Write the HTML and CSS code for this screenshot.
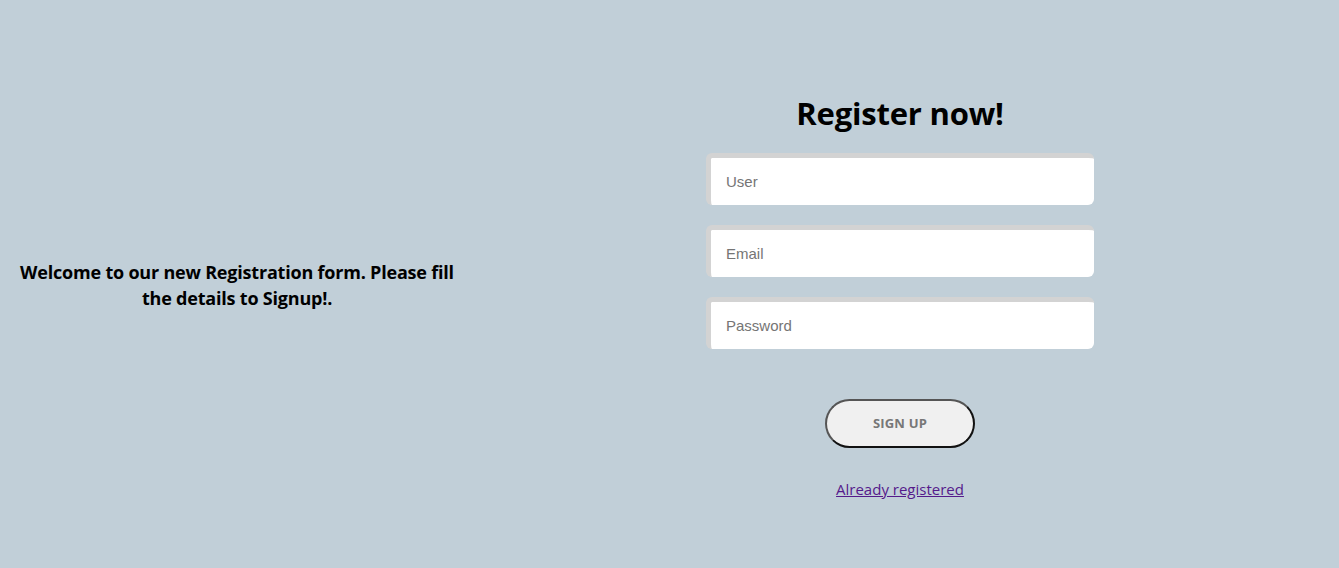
FILE: index.html
```html
<!DOCTYPE html>
<html>
<head>
<meta charset="utf-8">
<link rel="stylesheet" href="styles.css">
</head>
<body>
<main class="page">
  <section class="intro">
    <p>Welcome to our new Registration form. Please fill the details to Signup!.</p>
  </section>
  <section class="form-col">
    <h1>Register now!</h1>
    <form class="form">
      <input class="field" type="text" placeholder="User">
      <input class="field" type="email" placeholder="Email">
      <input class="field" type="password" placeholder="Password">
      <button class="btn" type="button">SIGN UP</button>
    </form>
    <a class="link" href="">Already registered</a>
  </section>
</main>
</body>
</html>
```

FILE: styles.css
```css
html, body {
  margin: 0;
  padding: 0;
  background: #c1cfd8;
}
body {
  font-family: "Open Sans", "Noto Sans", sans-serif;
}
.page {
  height: 568px;
  display: grid;
  grid-template-columns: 474px 232px 388px 1fr;
  align-items: center;
}
.intro {
  grid-column: 1;
  display: flex;
  justify-content: center;
  padding-top: 2px;
}
.intro p {
  width: 450px;
  margin: 0;
  text-align: center;
  font-size: 18px;
  font-weight: 700;
  line-height: 26px;
  letter-spacing: -0.2px;
  color: #000;
}
.form-col {
  grid-column: 3;
  display: flex;
  flex-direction: column;
  align-items: center;
  padding-top: 24px;
}
h1 {
  margin: 0 0 20px;
  font-size: 31px;
  line-height: 40px;
  font-weight: 700;
  letter-spacing: -0.2px;
  color: #000;
}
.form {
  width: 100%;
  display: flex;
  flex-direction: column;
  align-items: center;
  gap: 20px;
}
.field {
  box-sizing: border-box;
  width: 388px;
  height: 52px;
  margin: 0;
  border: 0;
  border-top: 5px solid #d3d3d3;
  border-left: 5px solid #d3d3d3;
  border-radius: 6px;
  background: #fff;
  padding: 0 15px;
  font-family: "Liberation Sans", Arial, sans-serif;
  font-size: 15px;
  color: #333;
  outline: none;
}
.field::placeholder {
  color: #757575;
}
.btn {
  margin-top: 30px;
  box-sizing: border-box;
  width: 150px;
  height: 49px;
  border: 2px solid #555;
  border-bottom-color: #111;
  border-right-color: #111;
  border-radius: 25px;
  background: #f0f0f0;
  font-family: "Open Sans", "Noto Sans", sans-serif;
  font-size: 13px;
  font-weight: 700;
  color: #777;
  letter-spacing: 0.2px;
}
.link {
  margin-top: 30px;
  font-size: 15px;
  line-height: 22px;
  color: #551a8b;
  text-decoration: underline;
}
```
